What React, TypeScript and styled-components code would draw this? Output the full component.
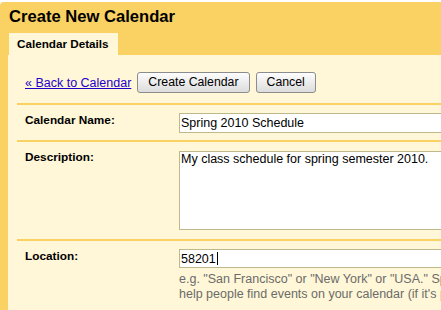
import styled, { createGlobalStyle } from 'styled-components';

const GlobalStyle = createGlobalStyle`
  html, body {
    margin: 0;
    background: #ffffff;
    overflow: hidden;
    font-family: "Liberation Sans", Arial, sans-serif;
  }
`;

const Page = styled.div`
  padding-top: 2px;
`;

const Panel = styled.div`
  width: 720px;
  background: #fad163;
  border-top-left-radius: 4px;
`;

const Title = styled.h1`
  margin: 0;
  padding: 5px 0 0 9px;
  font-size: 16.6px;
  line-height: 20px;
  font-weight: bold;
  color: #000;
`;

const Tabs = styled.div`
  display: flex;
  margin-top: 6px;
  padding-left: 9px;
`;

const Tab = styled.div<{ $active?: boolean }>`
  height: 22px;
  line-height: 22px;
  padding: 0 9px 0 8px;
  font-size: 11.7px;
  font-weight: bold;
  color: #000;
  background: ${p => (p.$active ? '#fff7d7' : 'transparent')};
`;

const Body = styled.div`
  margin-left: 8px;
  padding: 17px 0 0 9px;
  background: #fff7d7;
  height: 260px;
`;

const Actions = styled.div`
  display: flex;
  align-items: center;
  gap: 6px;
  padding: 0 0 10px 8px;
`;

const BackLink = styled.a`
  color: #2200cc;
  font-size: 12.5px;
  text-decoration: underline;
  cursor: pointer;
`;

const Button = styled.button`
  height: 21px;
  padding: 0 10px;
  border: 1px solid #8c8c8c;
  border-radius: 3px;
  background: linear-gradient(#fdfdfd, #dcdcdc);
  font-family: inherit;
  font-size: 12.3px;
  color: #000;
  line-height: 19px;
`;

const Row = styled.div<{ $pad?: number }>`
  display: grid;
  grid-template-columns: 162px 1fr;
  border-top: 2px solid #fad163;
  padding: 8px 0 ${p => p.$pad ?? 7}px;
`;

const Label = styled.div`
  padding-left: 8px;
  font-size: 11.8px;
  line-height: 15px;
  font-weight: bold;
  color: #000;
`;

const Field = styled.div`
  display: flex;
  flex-direction: column;
`;

const TextInput = styled.input`
  box-sizing: border-box;
  width: 100%;
  height: 20px;
  margin: 0;
  padding: 0 1px;
  border: 1px solid #bdb98b;
  background: #fff;
  font-family: inherit;
  font-size: 12.5px;
  color: #000;
  outline: none;
`;

const TextArea = styled.textarea`
  box-sizing: border-box;
  width: 100%;
  height: 79px;
  margin: 1px 0 0;
  padding: 0 1px;
  border: 1px solid #bdb98b;
  background: #fff;
  font-family: inherit;
  font-size: 12.5px;
  line-height: 15px;
  color: #000;
  resize: none;
  outline: none;
`;

const FocusedBox = styled.div`
  box-sizing: border-box;
  display: flex;
  align-items: center;
  height: 19px;
  padding: 0 1px;
  border: 1px solid #bdb98b;
  background: #fff;
  font-size: 12.5px;
  color: #000;
  white-space: nowrap;
`;

const Caret = styled.span`
  display: inline-block;
  width: 1px;
  height: 13px;
  margin-left: 1px;
  background: #000;
`;

const Hint = styled.div`
  margin-top: 4px;
  font-size: 12.5px;
  line-height: 15px;
  color: #6b6b6b;
  white-space: nowrap;
`;

export default function App() {
  return (
    <>
      <GlobalStyle />
      <Page>
        <Panel>
          <Title>Create New Calendar</Title>
          <Tabs>
            <Tab $active>Calendar Details</Tab>
          </Tabs>
          <Body>
            <Actions>
              <BackLink>« Back to Calendar</BackLink>
              <Button>Create Calendar</Button>
              <Button>Cancel</Button>
            </Actions>

            <Row>
              <Label>Calendar Name:</Label>
              <Field>
                <TextInput defaultValue="Spring 2010 Schedule" />
              </Field>
            </Row>

            <Row $pad={9}>
              <Label>Description:</Label>
              <Field>
                <TextArea defaultValue="My class schedule for spring semester 2010." />
              </Field>
            </Row>

            <Row>
              <Label>Location:</Label>
              <Field>
                <FocusedBox>
                  58201<Caret />
                </FocusedBox>
                <Hint>
                  e.g. "San Francisco" or "New York" or "USA." Specifying a general geographic location will
                  <br />
                  help people find events on your calendar (if it's public)
                </Hint>
              </Field>
            </Row>
          </Body>
        </Panel>
      </Page>
    </>
  );
}
